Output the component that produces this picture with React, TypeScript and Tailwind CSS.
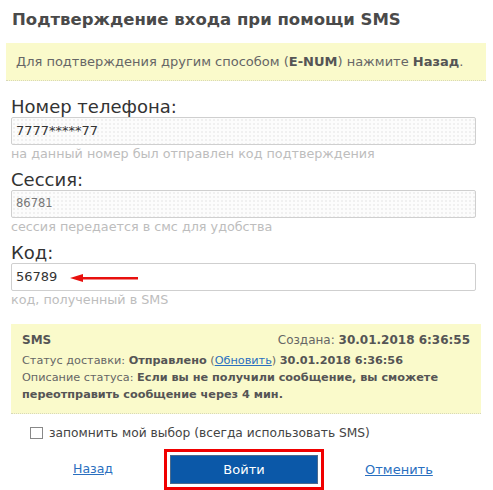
import React from "react";

const dots =
  "bg-[radial-gradient(#e2e2e2_0.6px,transparent_0.8px)] bg-[length:4px_4px] bg-[#fcfcfc]";

function Field({
  label,
  value,
  hint,
  readOnly,
  labelTop,
  small,
  children,
}: {
  label: string;
  value: string;
  hint: string;
  readOnly?: boolean;
  labelTop: string;
  small?: boolean;
  children?: React.ReactNode;
}) {
  return (
    <div className={labelTop}>
      <div className="text-[18px] leading-[21px] text-[#333]">{label}</div>
      <div
        className={`relative w-[465px] h-[28px] border border-[#cfcfcf] rounded-[2px] flex items-center pl-[4px] ${
          readOnly ? dots : "bg-white"
        }`}
      >
        <span className={small ? "text-[11.5px] text-[#777]" : "text-[13px] text-[#333]"}>{value}</span>
        {children}
      </div>
      <div className="text-[12.75px] leading-[18px] text-[#bdbdbd]">{hint}</div>
    </div>
  );
}

export default function App() {
  return (
    <div
      className="w-[493px] h-[490px] bg-white overflow-hidden"
      style={{ fontFamily: "'DejaVu Sans', Verdana, sans-serif" }}
    >
      <h1 className="pl-[12px] pt-[9px] text-[16.5px] leading-[22px] font-bold text-[#4a4a4a]">
        Подтверждение входа при помощи SMS
      </h1>

      <div className="ml-[6px] mt-[12px] w-[480px] h-[38px] bg-[#fafacb] border-b border-dotted border-[#d8d8b8] flex items-center pl-[10px] text-[13px] text-[#666]">
        <span>
          Для подтверждения другим способом (<b className="text-[#555]">E-NUM</b>) нажмите{" "}
          <b className="text-[#555]">Назад</b>.
        </span>
      </div>

      <div className="pl-[11px]">
        <Field
          labelTop="mt-[15px]"
          label="Номер телефона:"
          value="7777*****77"
          hint="на данный номер был отправлен код подтверждения"
          readOnly
        />
        <Field
          labelTop="mt-[6px]"
          label="Сессия:"
          value="86781"
          hint="сессия передается в смс для удобства"
          readOnly
          small
        />
        <Field labelTop="mt-[6px]" label="Код:" value="56789" hint="код, полученный в SMS">
          <svg className="absolute left-[58px] top-[9px]" width="70" height="10" viewBox="0 0 70 10">
            <polygon points="0,5 13,1 13,9" fill="#e8100e" />
            <rect x="11" y="4" width="57" height="2.5" fill="#e8100e" />
          </svg>
        </Field>

        <div className="mt-[15px] w-[470px] h-[90px] bg-[#fafacb] border-b border-dotted border-[#d8d8b8] px-[11px] pt-[8px] text-[11.25px] leading-[17px] text-[#666]">
          <div className="flex justify-between text-[12px]">
            <b className="text-[#555]">SMS</b>
            <span>
              Создана: <b className="text-[#555]">30.01.2018 6:36:55</b>
            </span>
          </div>
          <div className="mt-[3px]">
            Статус доставки: <b className="text-[#555]">Отправлено</b> (
            <a href="#" className="text-[#2a6fbf] underline">
              Обновить
            </a>
            ) <b className="text-[#555]">30.01.2018 6:36:56</b>
          </div>
          <div>
            Описание статуса:{" "}
            <b className="text-[#555]">Если вы не получили сообщение, вы сможете</b>
          </div>
          <div>
            <b className="text-[#555]">переотправить сообщение через 4 мин.</b>
          </div>
        </div>
      </div>

      <label className="mt-[11px] ml-[30px] h-[16px] flex items-center gap-[6px] text-[12.25px] text-[#444]">
        <span className="w-[13px] h-[12px] border border-[#888] bg-white inline-block" />
        запомнить мой выбор (всегда использовать SMS)
      </label>

      <div className="mt-[8px] flex items-center">
        <a href="#" className="ml-[73px] text-[12.5px] text-[#2a6fbf] underline">
          Назад
        </a>
        <div className="ml-[51px] border-[3px] border-[#f00000] p-[3px]">
          <button className="w-[148px] h-[29px] bg-[#0b58a8] border border-[#4c6a8c] text-white text-[13px]">
            Войти
          </button>
        </div>
        <a href="#" className="ml-[41px] text-[13px] text-[#2a6fbf] underline">
          Отменить
        </a>
      </div>
    </div>
  );
}
